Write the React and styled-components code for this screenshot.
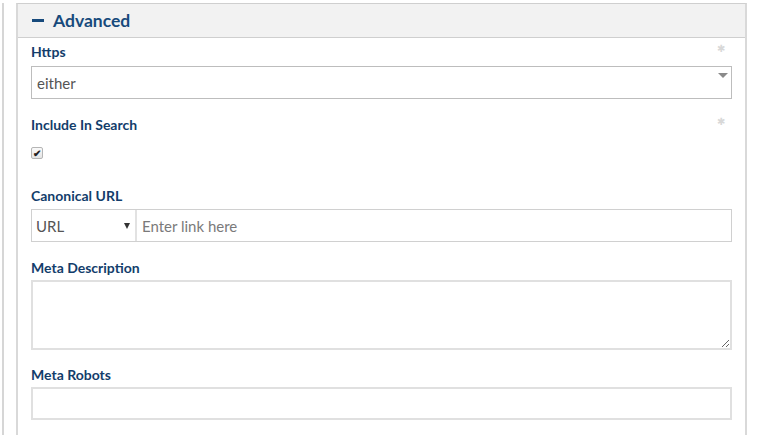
import React from "react";
import styled, { createGlobalStyle } from "styled-components";

const GlobalStyle = createGlobalStyle`
  body {
    margin: 0;
    background: #fff;
    font-family: Lato, "Open Sans", sans-serif;
  }
`;

const Page = styled.div`
  height: 435px;
  overflow: hidden;
  padding: 3px 0 0 2px;
  box-sizing: border-box;
`;

const Rail = styled.div`
  border-left: 2px solid #d6d6d6;
  padding-left: 12px;
  height: 100%;
`;

const Panel = styled.div`
  width: 731px;
  border: 1px solid #cfcfcf;
  border-bottom: none;
  border-left: 2px solid #d9d9d9;
  border-right: 2px solid #d9d9d9;
  box-sizing: border-box;
  height: 100%;
`;

const Header = styled.div`
  display: flex;
  align-items: center;
  gap: 9px;
  height: 33px;
  padding-left: 14px;
  background: #f2f2f2;
  border-bottom: 1px solid #cfcfcf;
`;

const Dash = styled.span`
  width: 12px;
  height: 3px;
  background: #174a7c;
`;

const Title = styled.h2`
  margin: 0;
  font-size: 17.5px;
  font-weight: 700;
  color: #174a7c;
`;

const Body = styled.div`
  padding: 6px 13px 0 13px;
`;

const Field = styled.div`
  position: relative;
  margin-bottom: ${(p) => p.$gap || 18}px;
`;

const Label = styled.label`
  display: block;
  font-size: 14px;
  line-height: 16px;
  font-weight: 700;
  color: #133d6b;
  margin-bottom: ${(p) => p.$gap || 5}px;
`;

const Required = styled.span`
  position: absolute;
  right: 7px;
  top: -2px;
  font-size: 10px;
  color: #d8d8d8;
`;

const SelectBox = styled.div`
  position: relative;
  height: 33px;
  border: 1px solid #bdbdbd;
  box-sizing: border-box;
  display: flex;
  align-items: center;
  padding-left: 5px;
  font-size: 15px;
  color: #555;
`;

const Caret = styled.span`
  position: absolute;
  right: 3px;
  top: 6px;
  width: 0;
  height: 0;
  border-left: 5px solid transparent;
  border-right: 5px solid transparent;
  border-top: 5px solid #8a8a8a;
`;

const Group = styled.div`
  display: flex;
  height: 33px;
  border: 1px solid #d0d0d0;
  box-sizing: border-box;
`;

const Addon = styled.div`
  width: 105px;
  display: flex;
  align-items: center;
  justify-content: space-between;
  padding: 0 5px 0 4px;
  box-sizing: border-box;
  border-right: 2px solid #e2e2e2;
  font-size: 15px;
  color: #555;
`;

const SmallCaret = styled.span`
  width: 0;
  height: 0;
  border-left: 3px solid transparent;
  border-right: 3px solid transparent;
  border-top: 6px solid #333;
`;

const TextInput = styled.input`
  flex: 1;
  border: none;
  outline: none;
  padding: 0 5px;
  font-family: inherit;
  font-size: 15px;
  color: #555;
  &::placeholder {
    color: #7a7a7a;
  }
`;

const Plain = styled.input`
  display: block;
  width: 100%;
  height: 33px;
  box-sizing: border-box;
  border: 2px solid #e0e0e0;
  outline: none;
`;

const Area = styled.textarea`
  display: block;
  width: 100%;
  height: 70px;
  box-sizing: border-box;
  border: 2px solid #e0e0e0;
  outline: none;
  margin: 0;
`;

const CheckBox = styled.span`
  display: flex;
  align-items: center;
  justify-content: center;
  width: 12px;
  height: 12px;
  box-sizing: border-box;
  border: 1px solid #b5b5b5;
  border-radius: 2px;
  background: linear-gradient(#fafafa, #e4e4e4);
  font-size: 10px;
  font-weight: 700;
  line-height: 1;
  color: #222;
`;

export default function App() {
  return (
    <>
      <GlobalStyle />
      <Page>
        <Rail>
          <Panel>
            <Header>
              <Dash />
              <Title>Advanced</Title>
            </Header>
            <Body>
              <Field>
                <Required>✱</Required>
                <Label $gap={6}>Https</Label>
                <SelectBox>
                  either
                  <Caret />
                </SelectBox>
              </Field>
              <Field $gap={29}>
                <Required>✱</Required>
                <Label $gap={14}>Include In Search</Label>
                <CheckBox>✔</CheckBox>
              </Field>
              <Field>
                <Label>Canonical URL</Label>
                <Group>
                  <Addon>
                    URL
                    <SmallCaret />
                  </Addon>
                  <TextInput placeholder="Enter link here" />
                </Group>
              </Field>
              <Field $gap={17}>
                <Label $gap={4}>Meta Description</Label>
                <Area />
              </Field>
              <Field>
                <Label $gap={4}>Meta Robots</Label>
                <Plain />
              </Field>
            </Body>
          </Panel>
        </Rail>
      </Page>
    </>
  );
}
